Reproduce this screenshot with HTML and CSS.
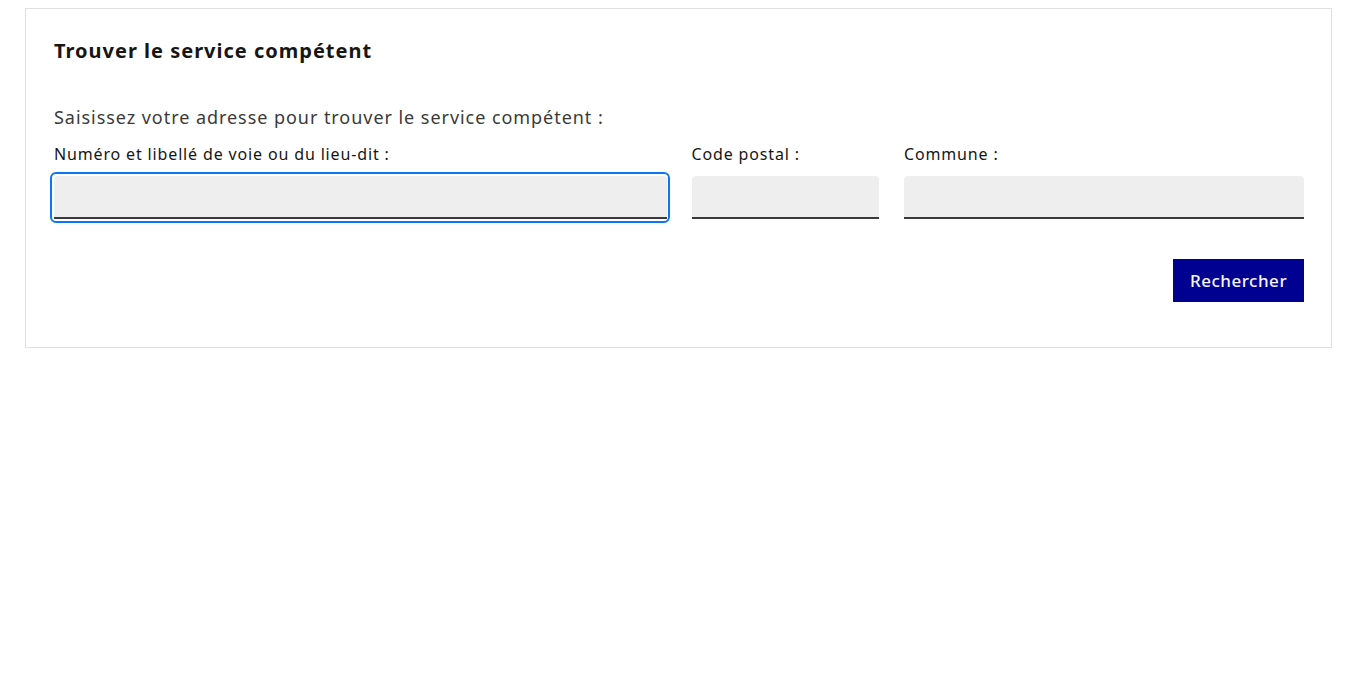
FILE: index.html
```html
<!DOCTYPE html>
<html lang="fr">
<head>
	<meta charset="utf-8">
	<title>Trouver le service compétent</title>
	<link rel="stylesheet" href="styles.css">
</head>
<body>
	<div class="page">
		<form class="card">
			<h2 class="card-title">Trouver le service compétent</h2>
			<p class="intro">Saisissez votre adresse pour trouver le service compétent :</p>
			<div class="fields">
				<div class="field field-voie">
					<label for="voie">Numéro et libellé de voie ou du lieu-dit :</label>
					<div class="input-wrap focused"><input type="text" id="voie" name="voie"></div>
				</div>
				<div class="field field-cp">
					<label for="cp">Code postal :</label>
					<div class="input-wrap"><input type="text" id="cp" name="cp"></div>
				</div>
				<div class="field field-commune">
					<label for="commune">Commune :</label>
					<div class="input-wrap"><input type="text" id="commune" name="commune"></div>
				</div>
			</div>
			<div class="actions">
				<button type="button" class="btn">Rechercher</button>
			</div>
		</form>
	</div>
</body>
</html>
```

FILE: styles.css
```css
body,h2,p,form,div,label,input,button{margin:0;padding:0;}
body{font-family:"Noto Sans","Liberation Sans",sans-serif;color:#161616;background:#fff;}
button,input{outline:none;border:none;background:none;font-family:inherit;}

.page{padding:8px 18px 0 25px;}
.card{border:1px solid #e0e0e0;padding:26px 27px 45px 28px;}
.card-title{font-size:20px;font-weight:700;line-height:32px;color:#161616;letter-spacing:1px;}
.intro{margin-top:36px;font-size:18px;line-height:28px;color:#3a3a3a;letter-spacing:0.95px;}

.fields{display:grid;grid-template-columns:repeat(12,1fr);column-gap:25px;margin-top:11px;}
.field-voie{grid-column:span 6;}
.field-cp{grid-column:span 2;}
.field-commune{grid-column:span 4;}
.field label{display:block;font-size:16px;line-height:24px;color:#161616;margin-bottom:10px;letter-spacing:0.85px;}

.input-wrap{position:relative;}
.input-wrap input{display:block;width:100%;height:43px;box-sizing:border-box;background:#eee;border-radius:4px 4px 0 0;box-shadow:inset 0 -2px 0 0 #3a3a3a;padding:0 16px;font-size:16px;}
.focused::after{content:"";position:absolute;left:-4px;right:-3px;top:-4px;bottom:-4px;border:2px solid #0a76f6;border-radius:6px;}

.actions{display:flex;justify-content:flex-end;margin-top:40px;}
.btn{background:#000091;color:#f5f5fe;font-size:17px;line-height:24px;padding:10px 17px 9px;font-weight:500;letter-spacing:0.5px;width:131px;cursor:pointer;}
```
